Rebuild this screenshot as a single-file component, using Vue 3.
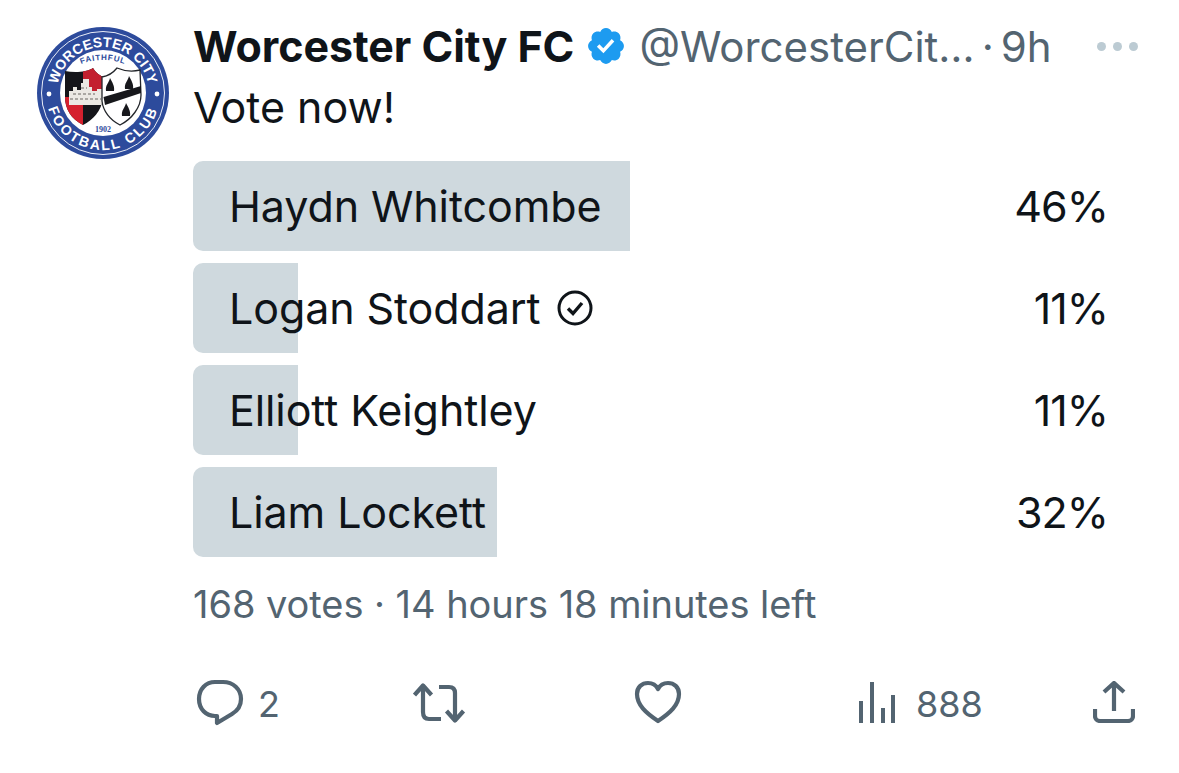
<script setup>
const options = [
  { name: 'Haydn Whitcombe', pct: 46, width: 437, mine: false },
  { name: 'Logan Stoddart', pct: 11, width: 105, mine: true },
  { name: 'Elliott Keightley', pct: 11, width: 105, mine: false },
  { name: 'Liam Lockett', pct: 32, width: 304, mine: false },
]
</script>

<template>
  <div class="tweet">
    <div class="avatar-col">
      <svg class="avatar" viewBox="0 0 132 132" width="132" height="132">
        <defs>
          <path id="topArc" d="M 20 66 A 46 46 0 0 1 112 66" />
          <path id="botArc" d="M 9 66 A 57 57 0 0 0 123 66" />
          <path id="faithArc" d="M 6 93 A 60 60 0 0 1 126 93" />
          <clipPath id="leftShield">
            <path d="M28 44 C38 46 50 45 56 41 C58 45 62 48 66 50 L66 72 C64 84 56 93 46 98 C34 92 28 82 28 70 Z" />
          </clipPath>
        </defs>
        <circle cx="66" cy="66" r="66" fill="#2d4b9c" />
        <circle cx="66" cy="66" r="61.5" fill="none" stroke="#e8ecf6" stroke-width="1" />
        <circle cx="66" cy="66" r="43" fill="#ffffff" />
        <text class="ring" fill="#fff"><textPath href="#topArc" startOffset="50%" text-anchor="middle">WORCESTER CITY</textPath></text>
        <text class="ring wide" fill="#fff"><textPath href="#botArc" startOffset="50%" text-anchor="middle">FOOTBALL CLUB</textPath></text>
        <circle cx="12" cy="67" r="2.4" fill="#fff" />
        <circle cx="120" cy="67" r="2.4" fill="#fff" />
        <text class="faith" fill="#2d4b9c"><textPath href="#faithArc" startOffset="50%" text-anchor="middle">FAITHFUL</textPath></text>
        <text class="year" x="66" y="105" text-anchor="middle" fill="#2d4b9c">1902</text>
        <g clip-path="url(#leftShield)">
          <rect x="24" y="38" width="44" height="64" fill="#15151a" />
          <rect x="24" y="70" width="22" height="32" fill="#d5202e" />
          <rect x="46" y="38" width="22" height="32" fill="#c3202f" />
          <path d="M32 78 V64 H36 V60 H40 V63 H44 V56 H46 V52 H52 V60 H55 V64 H60 V62 H65 V78 Z" fill="#ebe8e3" />
          <path d="M33 72 H64 M36 67 H58 M44 61 H50" stroke="#6a6663" stroke-width="1" stroke-dasharray="3 2" />
        </g>
        <path d="M65 50 C71 49 76 46 80 41 C87 44 95 45 103 43 L104 68 C104 80 95 92 83 98 C73 93 66 84 65 74 Z" fill="#fff" stroke="#23262b" stroke-width="1.3" />
        <path d="M66.5 70 L104 59 L104 66 L68 78 Z" fill="#17181c" />
        <path d="M69 64 C68 58 72 56 73 51 C75 55 78 59 77 64 Z M88 62 C87 56 91 54 92 49 C94 53 97 57 96 62 Z M85 89 C84 83 88 81 89 76 C91 80 94 84 93 89 Z" fill="#17181c" />
      </svg>
    </div>
    <div class="main">
      <div class="head">
        <span class="name">Worcester City FC</span>
        <svg class="badge" viewBox="0 0 24 24" width="42" height="42">
          <path fill="#1d9bf0" d="M22.25 12c0-1.43-.88-2.67-2.19-3.34.46-1.39.2-2.9-.81-3.91s-2.52-1.27-3.91-.81c-.66-1.31-1.91-2.19-3.34-2.19s-2.67.88-3.33 2.19c-1.4-.46-2.91-.2-3.92.81s-1.26 2.52-.8 3.91c-1.31.67-2.2 1.91-2.2 3.34s.89 2.67 2.2 3.34c-.46 1.39-.21 2.9.8 3.91s2.52 1.26 3.91.81c.67 1.31 1.91 2.19 3.34 2.19s2.68-.88 3.34-2.19c1.39.45 2.9.2 3.91-.81s1.27-2.52.81-3.91c1.31-.67 2.19-1.91 2.19-3.34zm-11.71 4.2L6.8 12.46l1.41-1.42 2.26 2.26 4.8-5.23 1.47 1.36-6.2 6.77z" />
        </svg>
        <span class="handle">@WorcesterCit…</span>
        <span class="sep">·</span>
        <span class="time">9h</span>
        <span class="more"><i></i><i></i><i></i></span>
      </div>
      <div class="text">Vote now!</div>
      <div class="poll">
        <div v-for="o in options" :key="o.name" class="row">
          <div class="bar" :style="{ width: o.width + 'px' }"></div>
          <span class="label">
            {{ o.name }}
            <svg v-if="o.mine" class="check" viewBox="0 0 36 36" width="36" height="36">
              <circle cx="18" cy="18" r="16" fill="none" stroke="#0f1419" stroke-width="3" />
              <path d="M11 18.5 L16 23.5 L25 13" fill="none" stroke="#0f1419" stroke-width="3.4" />
            </svg>
          </span>
          <span class="pct">{{ o.pct }}%</span>
        </div>
      </div>
      <div class="meta">168 votes · 14 hours 18 minutes left</div>
      <div class="actions">
        <div class="action">
          <svg viewBox="0 0 48 48" width="48" height="48" fill="none" stroke="#536471" stroke-width="4.2">
            <path d="M19 4 H27 C37 4 45 11 45 21 C45 28 41 33 36 36 L21 45 V38 H19 C10 38 3 31 3 21 C3 11 10 4 19 4 Z" stroke-linejoin="round" />
          </svg>
          <span class="count">2</span>
        </div>
        <div class="action">
          <svg viewBox="0 0 54 44" width="54" height="44" fill="none" stroke="#536471" stroke-width="4.2" stroke-linejoin="round">
            <path d="M1.5 15 L10 5.500 L18.500 15 M10 6 V32 C10 37 12 39 16 39 H28" />
            <path d="M26 7 H36 C40 7 42 9 42 13 V39 M33.500 31 L42 40.500 L50.500 31" />
          </svg>
        </div>
        <div class="action">
          <svg viewBox="0 0 48 44" width="48" height="44" fill="none" stroke="#536471" stroke-width="4.2" stroke-linejoin="round">
            <path d="M24 41 C12 33 3 25 3 14 C3 7 8 3 14 3 C18 3 22 5 24 9 C26 5 30 3 34 3 C40 3 45 7 45 14 C45 25 36 33 24 41 Z" />
          </svg>
        </div>
        <div class="action views">
          <svg viewBox="0 0 36 42" width="36" height="42" fill="#536471">
            <rect x="0" y="20" width="4" height="22" />
            <rect x="11" y="1" width="4" height="41" />
            <rect x="22" y="27" width="4" height="15" />
            <rect x="32" y="14" width="4" height="28" />
          </svg>
          <span class="count">888</span>
        </div>
        <div class="action">
          <svg viewBox="0 0 42 42" width="42" height="42" fill="none" stroke="#536471" stroke-width="4.2">
            <path d="M11 11 L21 2 L31 11 M21 3 V30" />
            <path d="M2 28 V35 C2 38 4 40 7 40 H35 C38 40 40 38 40 35 V28" />
          </svg>
        </div>
      </div>
    </div>
  </div>
</template>

<style scoped>
.tweet {
  display: flex;
  width: 1179px;
  height: 773px;
  box-sizing: border-box;
  background: #fff;
  font-family: Inter, "Liberation Sans", sans-serif;
  color: #0f1419;
  overflow: hidden;
}
.avatar-col {
  width: 193px;
  flex: none;
  padding: 27px 0 0 37px;
  box-sizing: border-box;
}
.avatar { display: block; }
.ring { font: 700 14px "Liberation Sans", sans-serif; }
.wide { letter-spacing: 2.2px; }
.faith { font: 700 8px "Liberation Sans", sans-serif; letter-spacing: 0.8px; }
.year { font: 700 8px "Liberation Serif", serif; }
.main { flex: 1; min-width: 0; padding-top: 17px; }
.head { display: flex; align-items: center; height: 58px; }
.name { font-size: 43px; font-weight: 700; letter-spacing: -0.05px; }
.badge { margin-left: 11px; }
.handle { margin-left: 12px; font-size: 42px; color: #536471; }
.sep { margin-left: 7px; font-size: 42px; color: #536471; }
.time { margin-left: 7px; font-size: 42px; color: #536471; }
.more { display: flex; gap: 7px; margin-left: 45px; }
.more i { width: 9px; height: 9px; border-radius: 50%; background: #bccbd3; }
.text { font-size: 43px; line-height: 60px; margin-top: 2px; }
.poll { display: flex; flex-direction: column; gap: 12px; margin-top: 24px; width: 915px; }
.row {
  position: relative;
  display: flex;
  align-items: center;
  justify-content: space-between;
  height: 90px;
  padding-left: 36px;
  font-size: 43px;
}
.bar { position: absolute; left: 0; top: 0; bottom: 0; background: #cfd9de; border-radius: 10px 0 0 10px; }
.label { position: relative; display: flex; align-items: center; gap: 17px; letter-spacing: -0.1px; }
.pct { position: relative; letter-spacing: -1px; }
.check { display: block; }
.meta { margin-top: 24px; font-size: 38px; line-height: 46px; color: #536471; letter-spacing: -0.05px; }
.actions {
  display: grid;
  grid-template-columns: 217px 221px 225px 234px auto;
  align-items: center;
  margin: 48px 0 0 3px;
  height: 54px;
}
.action { display: flex; align-items: center; color: #536471; }
.count { font-size: 36px; margin-left: 14px; padding-top: 4px; }
.views .count { margin-left: 21px; }
</style>
